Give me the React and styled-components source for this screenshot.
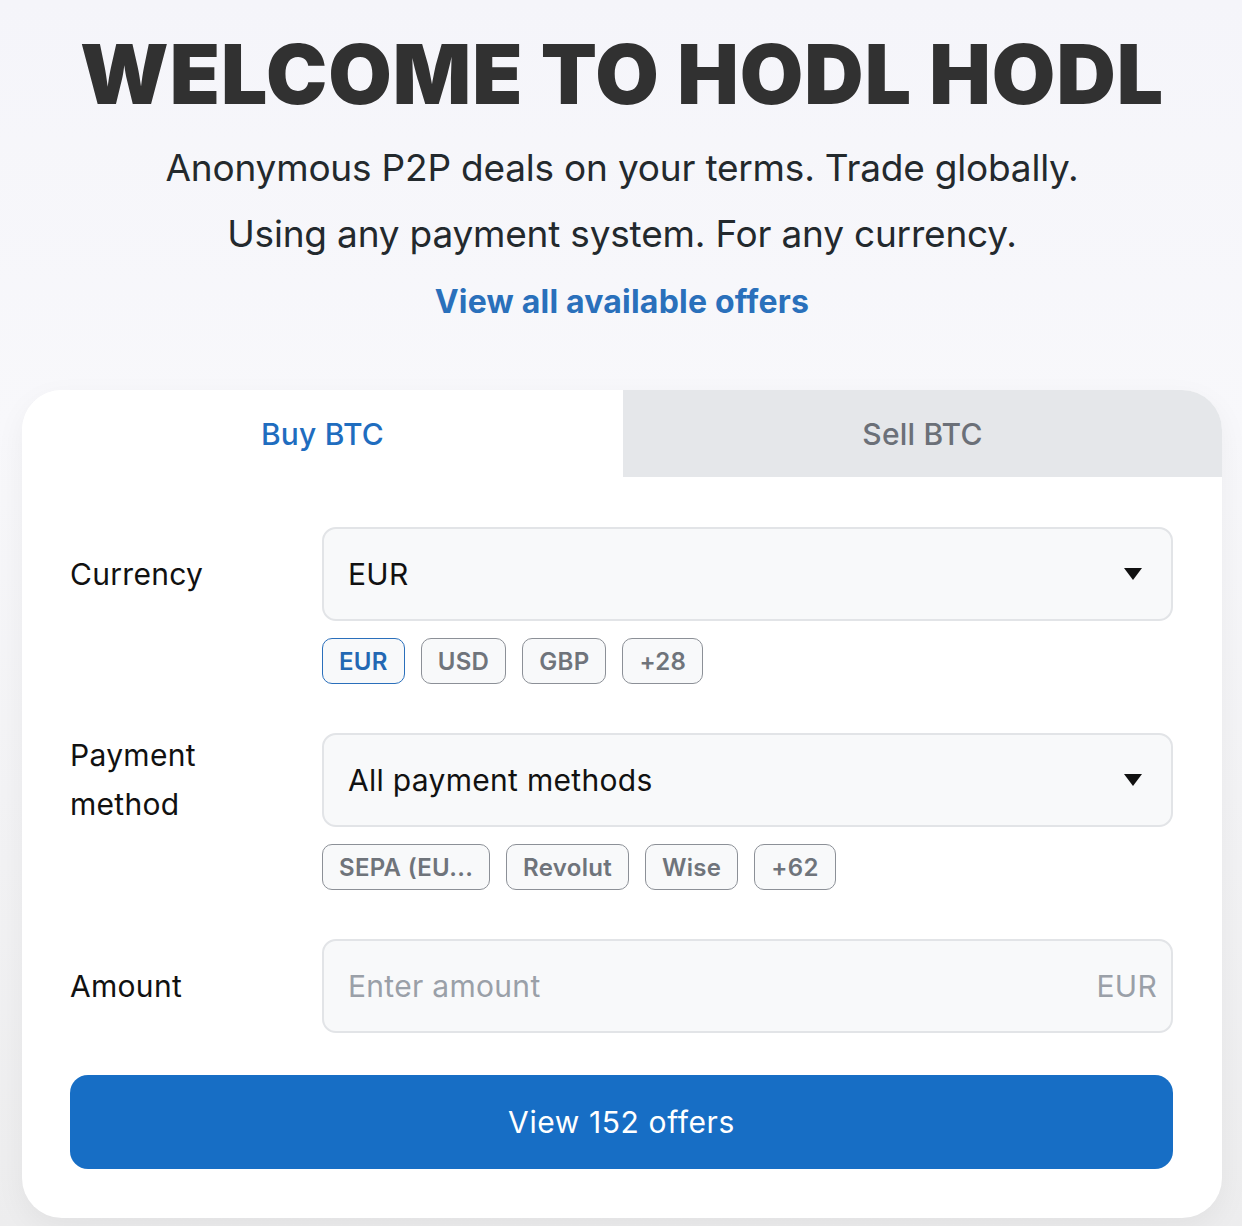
import React from 'react'
import styled, { createGlobalStyle } from 'styled-components'

const GlobalStyle = createGlobalStyle`
  html, body {
    margin: 0;
    padding: 0;
  }
  body {
    font-family: Inter, "Noto Sans", "Liberation Sans", sans-serif;
    background: linear-gradient(180deg, #f5f5fa 0%, #f8f8fb 35%, #ededee 100%);
    color: #202326;
  }
`

const Page = styled.main`
  width: 1242px;
  min-height: 1226px;
  box-sizing: border-box;
  padding: 32px 20px 8px 22px;
  display: flex;
  flex-direction: column;
  align-items: center;
`

const Title = styled.h1`
  margin: 0;
  font-family: Inter, "DejaVu Sans", sans-serif;
  font-weight: 900;
  font-size: 82px;
  line-height: 86px;
  letter-spacing: 1px;
  color: #313131;
  text-transform: uppercase;
  white-space: nowrap;
`

const Lead = styled.p`
  margin: 17px 0 0;
  text-align: center;
  font-size: 37px;
  line-height: 66px;
  letter-spacing: -0.2px;
  color: #23292d;
`

const OffersLink = styled.a`
  margin-top: 15px;
  font-size: 32px;
  line-height: 40px;
  font-weight: 700;
  letter-spacing: 0.2px;
  color: #2a70bb;
  text-decoration: none;
`

const Card = styled.section`
  margin-top: 68px;
  width: 100%;
  background: #fff;
  border-radius: 40px;
  overflow: hidden;
  box-shadow: 0 10px 30px rgba(0, 0, 0, 0.05);
`

const Tabs = styled.div`
  display: grid;
  grid-template-columns: 601px 1fr;
  height: 87px;
`

const Tab = styled.button`
  border: 0;
  margin: 0;
  padding: 0;
  font-family: inherit;
  font-size: 30px;
  font-weight: 500;
  letter-spacing: 0.2px;
  color: ${p => (p.$active ? '#1f6dbf' : '#6b7078')};
  background: ${p => (p.$active ? '#fff' : '#e5e7ea')};
`

const Form = styled.div`
  padding: 50px 49px 49px 48px;
  display: flex;
  flex-direction: column;
  gap: 49px;
`

const Row = styled.div`
  display: grid;
  grid-template-columns: 252px 1fr;
`

const Label = styled.label`
  height: 94px;
  display: flex;
  align-items: center;
  font-size: 30px;
  line-height: 49px;
  letter-spacing: 0.3px;
  color: #111;
  width: 150px;
`

const Field = styled.div`
  height: 94px;
  box-sizing: border-box;
  border: 2px solid #e2e4e7;
  border-radius: 14px;
  background: #f8f9fa;
  display: flex;
  align-items: center;
  justify-content: space-between;
  padding: 0 28px 0 24px;
  font-size: 30px;
  letter-spacing: 0.3px;
  color: ${p => (p.$placeholder ? '#9aa0a8' : '#111')};
`

const Suffix = styled.span`
  color: #9aa0a8;
  margin-right: -14px;
`

const Chips = styled.div`
  display: flex;
  gap: 16px;
  margin-top: 17px;
`

const Chip = styled.span`
  height: 46px;
  box-sizing: border-box;
  padding: 0 16px;
  display: inline-flex;
  align-items: center;
  border-radius: 10px;
  border: 1.5px solid ${p => (p.$active ? '#2a6fbb' : '#8c9097')};
  background: #f8f9fa;
  color: ${p => (p.$active ? '#2368b3' : '#6f747b')};
  font-size: 24px;
  font-weight: 600;
  letter-spacing: 0.3px;
`

const Caret = () => (
  <svg width="20" height="14" viewBox="0 0 20 14">
    <path d="M1 1h18L10 13z" fill="#111" />
  </svg>
)

const Submit = styled.button`
  margin-top: -7px;
  height: 94px;
  border: 0;
  border-radius: 18px;
  background: #176ec5;
  color: #fff;
  font-family: inherit;
  font-size: 30px;
  letter-spacing: 0.6px;
`

export default function App() {
  return (
    <>
      <GlobalStyle />
      <Page>
        <Title>Welcome to Hodl Hodl</Title>
        <Lead>
          Anonymous P2P deals on your terms. Trade globally.
          <br />
          Using any payment system. For any currency.
        </Lead>
        <OffersLink href="#">View all available offers</OffersLink>
        <Card>
          <Tabs>
            <Tab $active>Buy BTC</Tab>
            <Tab>Sell BTC</Tab>
          </Tabs>
          <Form>
            <Row>
              <Label>Currency</Label>
              <div>
                <Field>
                  EUR
                  <Caret />
                </Field>
                <Chips>
                  <Chip $active>EUR</Chip>
                  <Chip>USD</Chip>
                  <Chip>GBP</Chip>
                  <Chip>+28</Chip>
                </Chips>
              </div>
            </Row>
            <Row>
              <Label>Payment method</Label>
              <div>
                <Field>
                  All payment methods
                  <Caret />
                </Field>
                <Chips>
                  <Chip>SEPA (EU...</Chip>
                  <Chip>Revolut</Chip>
                  <Chip>Wise</Chip>
                  <Chip>+62</Chip>
                </Chips>
              </div>
            </Row>
            <Row>
              <Label>Amount</Label>
              <Field $placeholder>
                Enter amount
                <Suffix>EUR</Suffix>
              </Field>
            </Row>
            <Submit>View 152 offers</Submit>
          </Form>
        </Card>
      </Page>
    </>
  )
}
